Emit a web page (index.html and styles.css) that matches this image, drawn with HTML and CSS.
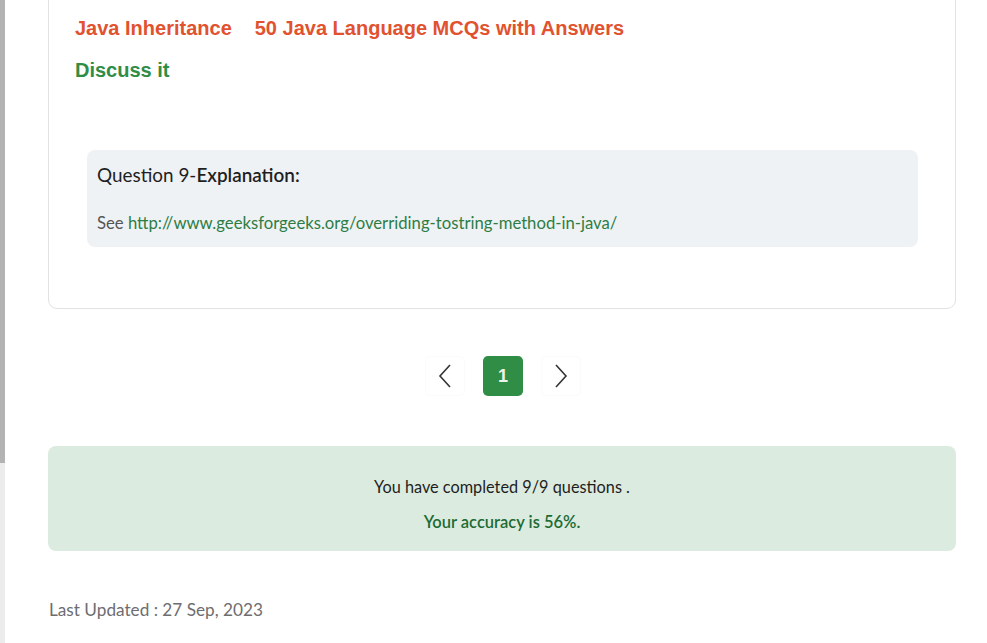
FILE: index.html
```html
<!DOCTYPE html>
<html>
<head>
<meta charset="utf-8">
<link rel="stylesheet" href="styles.css">
</head>
<body>
<div class="page">
  <div class="strip"><div class="strip-top"></div><div class="strip-bottom"></div></div>
  <main class="main">
    <section class="card">
      <div class="links">
        <a class="tag">Java Inheritance</a>
        <a class="tag">50 Java Language MCQs with Answers</a>
      </div>
      <a class="discuss">Discuss it</a>
      <div class="explain">
        <div class="explain-title">Question 9-<b>Explanation:</b></div>
        <p class="explain-text">See <a class="explain-link">http://www.geeksforgeeks.org/overriding-tostring-method-in-java/</a></p>
      </div>
    </section>
    <nav class="pager">
      <button class="nav-btn" aria-label="Previous">
        <svg width="14" height="24" viewBox="0 0 14 24"><path d="M12 1 L2 12 L12 23" fill="none" stroke="#333" stroke-width="1.6"/></svg>
      </button>
      <button class="page-btn">1</button>
      <button class="nav-btn" aria-label="Next">
        <svg width="14" height="24" viewBox="0 0 14 24"><path d="M2 1 L12 12 L2 23" fill="none" stroke="#333" stroke-width="1.6"/></svg>
      </button>
    </nav>
    <section class="result">
      <p class="result-line">You have completed 9/9 questions .</p>
      <p class="result-acc">Your accuracy is 56%.</p>
    </section>
    <p class="updated">Last Updated : 27 Sep, 2023</p>
  </main>
</div>
</body>
</html>
```
FILE: styles.css
```css
html, body {
  margin: 0;
  padding: 0;
  background: #fff;
  overflow: hidden;
}
body {
  font-family: "Source Sans Pro", Lato, "Noto Sans", sans-serif;
  color: #1f1f1f;
}
.page {
  display: flex;
  height: 643px;
}
.strip {
  width: 6px;
  display: flex;
  flex-direction: column;
  flex: none;
}
.strip-top {
  height: 463px;
  background: #b3b3b3;
  width: 5px;
}
.strip-bottom {
  flex: 1;
  background: #ececec;
  width: 5px;
}
.main {
  width: 908px;
  margin-left: 42px;
  display: flex;
  flex-direction: column;
}
.card {
  margin-top: -31px;
  border: 1px solid #e2e2e2;
  border-radius: 9px;
  padding: 43px 37px 61px 26px;
  display: flex;
  flex-direction: column;
}
.links {
  display: flex;
  gap: 23px;
}
.tag, .discuss {
  font-family: "Liberation Sans", Arial, sans-serif;
  font-weight: bold;
  font-size: 20px;
  line-height: 30px;
}
.tag {
  color: #e1522f;
}
.discuss {
  color: #2f8d46;
  margin-top: 12px;
}
.explain {
  margin: 65px 0 0 12px;
  background: #eef2f5;
  border-radius: 8px;
  padding: 12px 10px 12px;
}
.explain-title {
  font-size: 18.9px;
  line-height: 26px;
}
.explain-title b {
  font-weight: 600;
}
.explain-text {
  margin: 23px 0 0;
  font-size: 16.7px;
  line-height: 24px;
  color: #555;
}
.explain-link {
  color: #2f7d44;
}
.pager {
  display: flex;
  justify-content: center;
  gap: 18px;
  margin-top: 47px;
  margin-left: 2px;
}
.nav-btn, .page-btn {
  width: 40px;
  height: 40px;
  border-radius: 5px;
  display: flex;
  align-items: center;
  justify-content: center;
  padding: 0;
}
.nav-btn {
  background: #fff;
  border: 1px solid #fbfbfb;
}
.page-btn {
  background: #2f8d46;
  border: none;
  color: #eaf3ec;
  font-family: "Liberation Sans", Arial, sans-serif;
  font-weight: bold;
  font-size: 18px;
}
.result {
  margin-top: 50px;
  background: #dcebdf;
  border-radius: 8px;
  height: 105px;
  display: flex;
  flex-direction: column;
  align-items: center;
  justify-content: center;
  gap: 11px;
  padding-top: 11px;
  box-sizing: border-box;
}
.result-line {
  margin: 0;
  font-size: 16.3px;
  line-height: 24px;
  color: #1e1e1e;
}
.result-acc {
  margin: 0;
  font-size: 16.5px;
  line-height: 24px;
  font-weight: 600;
  color: #1d6b34;
}
.updated {
  margin: 46px 0 0 1px;
  font-size: 17.2px;
  line-height: 26px;
  color: #6d6d70;
}
```
